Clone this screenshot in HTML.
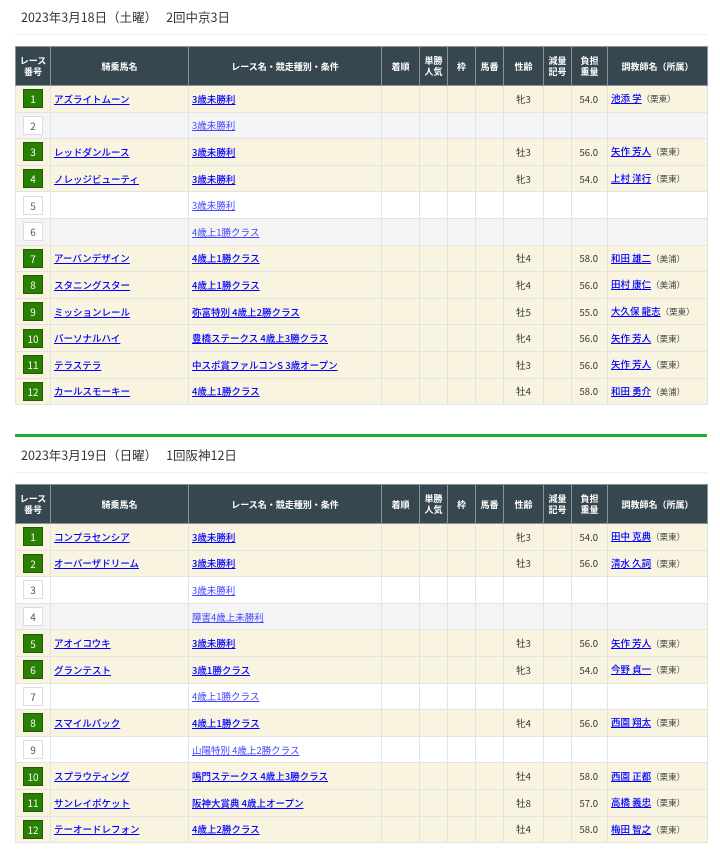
<!DOCTYPE html>
<html><head><meta charset="utf-8"><style>
*{box-sizing:border-box}
body{margin:0;background:#fff;font-family:"Noto Sans CJK JP","Liberation Sans",sans-serif;color:#333;width:720px;overflow:hidden}
.title{position:absolute;left:21px;font-size:12.5px;color:#333;line-height:18px}
.sep{position:absolute;left:15px;width:692px;height:1px;background:#eee}
.green{position:absolute;left:15px;width:692px;height:3px;background:#22aa38}
table{position:absolute;left:15px;width:692px;border-collapse:collapse;table-layout:fixed;font-size:9.5px}
th{background:#37474f;color:#fff;font-weight:bold;border:1px solid #8a9499;height:39px;line-height:11px;font-size:9px;padding:0;vertical-align:middle}
td{border:1px solid #e3e3e3;height:26.6px;padding:0 3px;white-space:nowrap;overflow:hidden;vertical-align:middle;line-height:14px}
tr.h td{background:#f8f4e0}
tr.g td{background:#f4f4f4}
tr.w td{background:#fff}
.c{text-align:center}
.r{text-align:right;padding-right:9px}
.b{display:inline-block;width:20px;height:19px;line-height:17px;text-align:center;font-size:10px;border:1px solid #1d5e05;background:#2a8004;color:#fff;vertical-align:middle}
.bw{display:inline-block;width:20px;height:19px;line-height:17px;text-align:center;font-size:10px;border:1px solid #ddd;background:#fff;color:#555;vertical-align:middle}
a{color:#00f;text-decoration:underline}
tr.h a{font-weight:500}
tr.g a,tr.w a{color:#44f}
.s{font-size:8.5px;color:#444}
</style></head><body>
<div class="title" style="top:8px">2023年3月18日（土曜）　 2回中京3日</div>
<div class="sep" style="top:34px"></div>
<table style="top:46px">
<colgroup><col style="width:35px"><col style="width:138px"><col style="width:193px"><col style="width:38px"><col style="width:28px"><col style="width:28px"><col style="width:28px"><col style="width:40px"><col style="width:28px"><col style="width:36px"><col style="width:100px"></colgroup>
<tr><th>レース<br>番号</th><th>騎乗馬名</th><th>レース名・競走種別・条件</th><th>着順</th><th>単勝<br>人気</th><th>枠</th><th>馬番</th><th>性齢</th><th>減量<br>記号</th><th>負担<br>重量</th><th>調教師名（所属）</th></tr>
<tr class="h"><td class="c"><span class="b">1</span></td><td><a>アズライトムーン</a></td><td><a>3歳未勝利</a></td><td></td><td></td><td></td><td></td><td class="c">牝3</td><td></td><td class="r">54.0</td><td><a>池添 学</a><span class="s">（栗東）</span></td></tr>
<tr class="g"><td class="c"><span class="bw">2</span></td><td></td><td><a>3歳未勝利</a></td><td></td><td></td><td></td><td></td><td></td><td></td><td></td><td></td></tr>
<tr class="h"><td class="c"><span class="b">3</span></td><td><a>レッドダンルース</a></td><td><a>3歳未勝利</a></td><td></td><td></td><td></td><td></td><td class="c">牡3</td><td></td><td class="r">56.0</td><td><a>矢作 芳人</a><span class="s">（栗東）</span></td></tr>
<tr class="h"><td class="c"><span class="b">4</span></td><td><a>ノレッジビューティ</a></td><td><a>3歳未勝利</a></td><td></td><td></td><td></td><td></td><td class="c">牝3</td><td></td><td class="r">54.0</td><td><a>上村 洋行</a><span class="s">（栗東）</span></td></tr>
<tr class="w"><td class="c"><span class="bw">5</span></td><td></td><td><a>3歳未勝利</a></td><td></td><td></td><td></td><td></td><td></td><td></td><td></td><td></td></tr>
<tr class="g"><td class="c"><span class="bw">6</span></td><td></td><td><a>4歳上1勝クラス</a></td><td></td><td></td><td></td><td></td><td></td><td></td><td></td><td></td></tr>
<tr class="h"><td class="c"><span class="b">7</span></td><td><a>アーバンデザイン</a></td><td><a>4歳上1勝クラス</a></td><td></td><td></td><td></td><td></td><td class="c">牡4</td><td></td><td class="r">58.0</td><td><a>和田 雄二</a><span class="s">（美浦）</span></td></tr>
<tr class="h"><td class="c"><span class="b">8</span></td><td><a>スタニングスター</a></td><td><a>4歳上1勝クラス</a></td><td></td><td></td><td></td><td></td><td class="c">牝4</td><td></td><td class="r">56.0</td><td><a>田村 康仁</a><span class="s">（美浦）</span></td></tr>
<tr class="h"><td class="c"><span class="b">9</span></td><td><a>ミッションレール</a></td><td><a>弥富特別 4歳上2勝クラス</a></td><td></td><td></td><td></td><td></td><td class="c">牡5</td><td></td><td class="r">55.0</td><td><a>大久保 龍志</a><span class="s">（栗東）</span></td></tr>
<tr class="h"><td class="c"><span class="b">10</span></td><td><a>パーソナルハイ</a></td><td><a>豊橋ステークス 4歳上3勝クラス</a></td><td></td><td></td><td></td><td></td><td class="c">牝4</td><td></td><td class="r">56.0</td><td><a>矢作 芳人</a><span class="s">（栗東）</span></td></tr>
<tr class="h"><td class="c"><span class="b">11</span></td><td><a>テラステラ</a></td><td><a>中スポ賞ファルコンS 3歳オープン</a></td><td></td><td></td><td></td><td></td><td class="c">牡3</td><td></td><td class="r">56.0</td><td><a>矢作 芳人</a><span class="s">（栗東）</span></td></tr>
<tr class="h"><td class="c"><span class="b">12</span></td><td><a>カールスモーキー</a></td><td><a>4歳上1勝クラス</a></td><td></td><td></td><td></td><td></td><td class="c">牡4</td><td></td><td class="r">58.0</td><td><a>和田 勇介</a><span class="s">（美浦）</span></td></tr>
</table>

<div class="green" style="top:434px"></div>
<div class="title" style="top:446px">2023年3月19日（日曜）　 1回阪神12日</div>
<div class="sep" style="top:472px"></div>
<table style="top:484px">
<colgroup><col style="width:35px"><col style="width:138px"><col style="width:193px"><col style="width:38px"><col style="width:28px"><col style="width:28px"><col style="width:28px"><col style="width:40px"><col style="width:28px"><col style="width:36px"><col style="width:100px"></colgroup>
<tr><th>レース<br>番号</th><th>騎乗馬名</th><th>レース名・競走種別・条件</th><th>着順</th><th>単勝<br>人気</th><th>枠</th><th>馬番</th><th>性齢</th><th>減量<br>記号</th><th>負担<br>重量</th><th>調教師名（所属）</th></tr>
<tr class="h"><td class="c"><span class="b">1</span></td><td><a>コンプラセンシア</a></td><td><a>3歳未勝利</a></td><td></td><td></td><td></td><td></td><td class="c">牝3</td><td></td><td class="r">54.0</td><td><a>田中 克典</a><span class="s">（栗東）</span></td></tr>
<tr class="h"><td class="c"><span class="b">2</span></td><td><a>オーバーザドリーム</a></td><td><a>3歳未勝利</a></td><td></td><td></td><td></td><td></td><td class="c">牡3</td><td></td><td class="r">56.0</td><td><a>清水 久詞</a><span class="s">（栗東）</span></td></tr>
<tr class="w"><td class="c"><span class="bw">3</span></td><td></td><td><a>3歳未勝利</a></td><td></td><td></td><td></td><td></td><td></td><td></td><td></td><td></td></tr>
<tr class="g"><td class="c"><span class="bw">4</span></td><td></td><td><a>障害4歳上未勝利</a></td><td></td><td></td><td></td><td></td><td></td><td></td><td></td><td></td></tr>
<tr class="h"><td class="c"><span class="b">5</span></td><td><a>アオイコウキ</a></td><td><a>3歳未勝利</a></td><td></td><td></td><td></td><td></td><td class="c">牡3</td><td></td><td class="r">56.0</td><td><a>矢作 芳人</a><span class="s">（栗東）</span></td></tr>
<tr class="h"><td class="c"><span class="b">6</span></td><td><a>グランテスト</a></td><td><a>3歳1勝クラス</a></td><td></td><td></td><td></td><td></td><td class="c">牝3</td><td></td><td class="r">54.0</td><td><a>今野 貞一</a><span class="s">（栗東）</span></td></tr>
<tr class="w"><td class="c"><span class="bw">7</span></td><td></td><td><a>4歳上1勝クラス</a></td><td></td><td></td><td></td><td></td><td></td><td></td><td></td><td></td></tr>
<tr class="h"><td class="c"><span class="b">8</span></td><td><a>スマイルパック</a></td><td><a>4歳上1勝クラス</a></td><td></td><td></td><td></td><td></td><td class="c">牝4</td><td></td><td class="r">56.0</td><td><a>西園 翔太</a><span class="s">（栗東）</span></td></tr>
<tr class="w"><td class="c"><span class="bw">9</span></td><td></td><td><a>山陽特別 4歳上2勝クラス</a></td><td></td><td></td><td></td><td></td><td></td><td></td><td></td><td></td></tr>
<tr class="h"><td class="c"><span class="b">10</span></td><td><a>スプラウティング</a></td><td><a>鳴門ステークス 4歳上3勝クラス</a></td><td></td><td></td><td></td><td></td><td class="c">牡4</td><td></td><td class="r">58.0</td><td><a>西園 正都</a><span class="s">（栗東）</span></td></tr>
<tr class="h"><td class="c"><span class="b">11</span></td><td><a>サンレイポケット</a></td><td><a>阪神大賞典 4歳上オープン</a></td><td></td><td></td><td></td><td></td><td class="c">牡8</td><td></td><td class="r">57.0</td><td><a>高橋 義忠</a><span class="s">（栗東）</span></td></tr>
<tr class="h"><td class="c"><span class="b">12</span></td><td><a>テーオードレフォン</a></td><td><a>4歳上2勝クラス</a></td><td></td><td></td><td></td><td></td><td class="c">牡4</td><td></td><td class="r">58.0</td><td><a>梅田 智之</a><span class="s">（栗東）</span></td></tr>
</table>
</body></html>
